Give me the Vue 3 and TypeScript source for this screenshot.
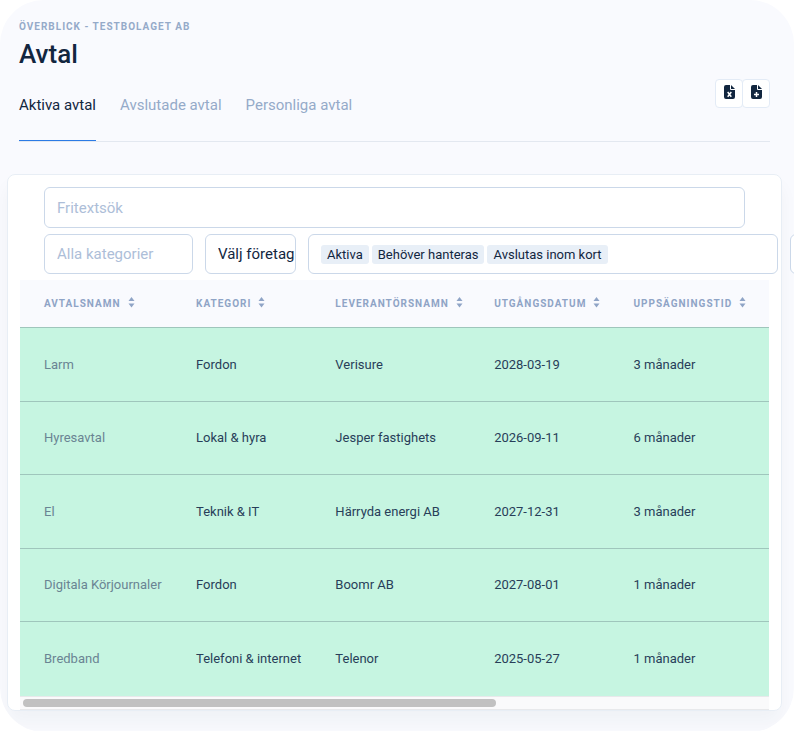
<script setup lang="ts">
import { computed, ref } from 'vue'

interface Column {
  key: string
  label: string
}

interface Contract {
  name: string
  category: string
  supplier: string
  endDate: string
  notice: string
}

const tabs = ['Aktiva avtal', 'Avslutade avtal', 'Personliga avtal']
const activeTab = ref(tabs[0])
const statuses = ['Aktiva', 'Behöver hanteras', 'Avslutas inom kort']

const columns: Column[] = [
  { key: 'name', label: 'Avtalsnamn' },
  { key: 'category', label: 'Kategori' },
  { key: 'supplier', label: 'Leverantörsnamn' },
  { key: 'date', label: 'Utgångsdatum' },
  { key: 'notice', label: 'Uppsägningstid' },
]

const contracts: Contract[] = [
  { name: 'Larm', category: 'Fordon', supplier: 'Verisure', endDate: '2028-03-19', notice: '3 månader' },
  { name: 'Hyresavtal', category: 'Lokal & hyra', supplier: 'Jesper fastighets', endDate: '2026-09-11', notice: '6 månader' },
  { name: 'El', category: 'Teknik & IT', supplier: 'Härryda energi AB', endDate: '2027-12-31', notice: '3 månader' },
  { name: 'Digitala Körjournaler', category: 'Fordon', supplier: 'Boomr AB', endDate: '2027-08-01', notice: '1 månader' },
  { name: 'Bredband', category: 'Telefoni & internet', supplier: 'Telenor', endDate: '2025-05-27', notice: '1 månader' },
]

const search = ref('')
const category = ref('')
const visibleShare = ref(0.637)
const thumbStyle = computed(() => ({ width: `${visibleShare.value * 100}%` }))
</script>

<template>
  <main class="page">
    <header class="header">
      <p class="eyebrow">Överblick - Testbolaget AB</p>
      <h1 class="title">Avtal</h1>
      <div class="header-row">
        <nav class="tabs">
          <a
            v-for="tab in tabs"
            :key="tab"
            href="#"
            class="tab"
            :class="{ active: tab === activeTab }"
            @click.prevent="activeTab = tab"
          >{{ tab }}</a>
        </nav>
        <div class="actions">
          <button type="button" class="action" aria-label="Exportera till Excel">
            <svg viewBox="0 0 11 14" width="11" height="14" aria-hidden="true">
              <path fill="#12263f" d="M2 0h4v4q0 1 1 1h4v7q0 2-2 2H2q-2 0-2-2V2q0-2 2-2z" />
              <path fill="#12263f" d="M7 0l4 4H7z" />
              <path stroke="#fff" stroke-width="1.5" d="M3.7 7l3.6 4.8M7.3 7l-3.6 4.8" />
            </svg>
          </button>
          <button type="button" class="action" aria-label="Nytt avtal">
            <svg viewBox="0 0 11 14" width="11" height="14" aria-hidden="true">
              <path fill="#12263f" d="M2 0h4v4q0 1 1 1h4v7q0 2-2 2H2q-2 0-2-2V2q0-2 2-2z" />
              <path fill="#12263f" d="M7 0l4 4H7z" />
              <path stroke="#fff" stroke-width="1.5" d="M5.5 7v5M3 9.5h5" />
            </svg>
          </button>
        </div>
      </div>
    </header>

    <section class="card">
      <form class="filters" @submit.prevent>
        <input v-model="search" class="field search" type="text" placeholder="Fritextsök" aria-label="Fritextsök" />
        <div class="filter-row">
          <input v-model="category" class="field category" type="text" placeholder="Alla kategorier" aria-label="Alla kategorier" />
          <select class="field company" aria-label="Företag">
            <option>Välj företag</option>
          </select>
          <div class="field status">
            <button v-for="status in statuses" :key="status" type="button" class="tag">{{ status }}</button>
          </div>
          <input class="field extra" type="text" aria-label="Filter" />
        </div>
      </form>

      <div class="table-wrap">
        <table class="table">
          <colgroup>
            <col v-for="column in columns" :key="column.key" :class="`col-${column.key}`" />
          </colgroup>
          <thead>
            <tr>
              <th v-for="column in columns" :key="column.key" scope="col">
                <button type="button" class="sort">
                  {{ column.label }}
                  <svg viewBox="0 0 7 11" width="7" height="11" aria-hidden="true">
                    <path fill="currentColor" d="M3.5 0L6.5 4H.5zM3.5 10.5L.5 6.5h6z" />
                  </svg>
                </button>
              </th>
            </tr>
          </thead>
          <tbody>
            <tr v-for="contract in contracts" :key="contract.name">
              <td class="name">{{ contract.name }}</td>
              <td>{{ contract.category }}</td>
              <td>{{ contract.supplier }}</td>
              <td>{{ contract.endDate }}</td>
              <td>{{ contract.notice }}</td>
            </tr>
          </tbody>
        </table>
        <div class="scroll-track" aria-hidden="true">
          <div class="scroll-thumb" :style="thumbStyle"></div>
        </div>
      </div>
    </section>
  </main>
</template>

<style>
body {
  background: #fff;
}
</style>

<style scoped>
* {
  box-sizing: border-box;
}

.page {
  overflow: hidden;
  padding: 19px 12px 21px 7px;
  border-radius: 44px;
  background: #f9fafe;
  color: #12263f;
  font-family: Roboto, "Liberation Sans", sans-serif;
  font-size: 13px;
}

button,
input,
select {
  font: inherit;
  color: inherit;
}

.header {
  padding: 0 12px;
}

.eyebrow {
  margin: 0;
  color: #95aac9;
  font-size: 10px;
  font-weight: 700;
  line-height: 16px;
  letter-spacing: 1px;
  text-transform: uppercase;
}

.title {
  margin: 3px 0 0;
  font-size: 26px;
  font-weight: 500;
  line-height: 32px;
}

.header-row {
  display: flex;
  justify-content: space-between;
  align-items: flex-start;
  border-bottom: 1px solid #e3e8f0;
}

.tabs {
  display: flex;
  gap: 24px;
}

.tab {
  padding: 24px 0;
  border-bottom: 1px solid transparent;
  color: #95aac9;
  font-size: 15px;
  line-height: 22px;
  text-decoration: none;
}

.tab.active {
  border-bottom-color: #2c7be5;
  color: #12263f;
}

.actions {
  display: flex;
  padding-top: 9px;
}

.action {
  display: grid;
  place-items: start center;
  width: 28px;
  height: 29px;
  padding: 5px 0 0;
  border: 1px solid #e3ebf6;
  border-radius: 4px;
  background: #fff;
}

.action + .action {
  margin-left: -1px;
}

.card {
  margin-top: 32px;
  padding: 12px 12px 0;
  border: 1px solid #e8eef5;
  border-radius: 8px;
  background: #fff;
  box-shadow: 0 12px 18px rgba(18, 56, 63, 0.04);
}

.filters {
  display: grid;
  gap: 6px;
  padding: 0 24px 6px;
}

.filter-row {
  display: flex;
  gap: 12px;
  min-width: 0;
}

.field {
  flex: none;
  height: 40px;
  padding: 0 12px;
  border: 1px solid #cbd8e9;
  border-radius: 6px;
  background: #fff;
  font-size: 15px;
}

.field::placeholder {
  color: #adbed8;
  opacity: 1;
}

.search {
  width: 100%;
  height: 41px;
}

.category {
  width: 149px;
}

.company {
  width: 91px;
  padding-right: 0;
  appearance: none;
}

.status {
  display: flex;
  align-items: center;
  gap: 3px;
  width: 470px;
}

.extra {
  width: 149px;
}

.tag {
  height: 19px;
  padding: 0 6px;
  border: 0;
  border-radius: 3px;
  background: #e8eff7;
  font-size: 13px;
  line-height: 19px;
}

.table {
  width: 100%;
  border-collapse: separate;
  border-spacing: 0;
  table-layout: fixed;
}

.col-name {
  width: 20.3%;
}

.col-category,
.col-date {
  width: 18.6%;
}

.col-supplier {
  width: 21.2%;
}

th,
td {
  padding: 0 0 0 24px;
  text-align: left;
  white-space: nowrap;
}

th {
  height: 48px;
  border-bottom: 1px solid #9fc6bc;
  background: #f9fafe;
}

.sort {
  display: flex;
  align-items: center;
  gap: 7px;
  padding: 0;
  border: 0;
  background: none;
  color: #8fa4c6;
  font-size: 10px;
  font-weight: 700;
  letter-spacing: 1px;
  text-transform: uppercase;
}

.sort svg {
  margin-bottom: 2px;
}

tbody tr {
  height: 73px;
  background: #c6f5e1;
}

tbody tr:nth-child(odd) {
  height: 74px;
}

tbody tr:not(:last-child) td {
  border-bottom: 1px solid #9fc6bc;
}

td {
  padding-bottom: 1px;
  color: #283e59;
}

.name {
  color: #6a8493;
}

.scroll-track {
  height: 14px;
  padding: 2px 3px;
  border-top: 1px solid #e8e9eb;
  border-bottom: 1px solid #e8e9eb;
  background: #fafafb;
}

.scroll-thumb {
  height: 8px;
  border-radius: 4px;
  background: #c1c1c1;
}
</style>
